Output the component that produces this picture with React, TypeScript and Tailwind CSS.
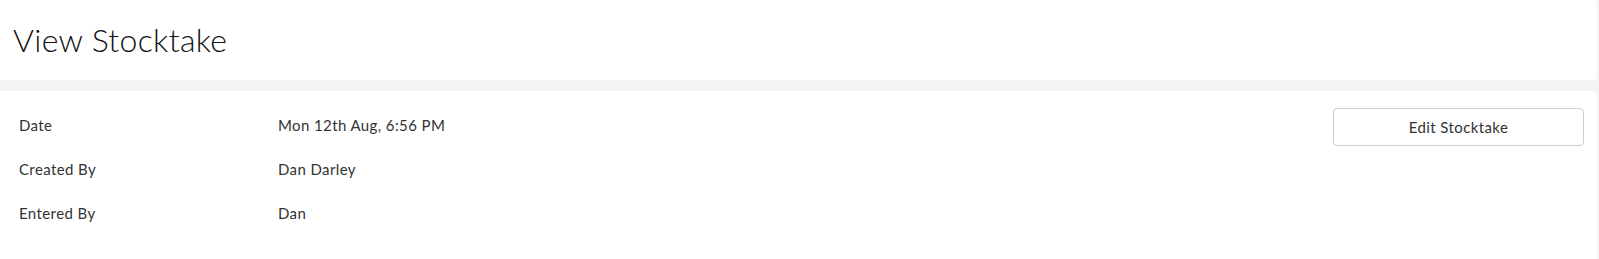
export default function App() {
  const rows = [
    { label: "Date", value: "Mon 12th Aug, 6:56 PM" },
    { label: "Created By", value: "Dan Darley" },
    { label: "Entered By", value: "Dan" },
  ];

  return (
    <div className="h-[259px] w-full bg-[#f3f3f3] font-['Lato',sans-serif] text-[#333]">
      <div className="mr-[2px] flex h-[80px] items-center rounded-r bg-white pl-[13px]">
        <h1 className="text-[32px] font-light leading-none tracking-[0.3px] text-[#111]">View Stocktake</h1>
      </div>
      <div className="mr-[2px] mt-[11px] flex h-[168px] rounded-tr bg-white">
        <div className="flex-1 pl-[19px] pt-[24px]">
          {rows.map((r) => (
            <div key={r.label} className="flex h-[44px] text-[15px] leading-[20px] tracking-[0.4px]">
              <div className="w-[259px]">{r.label}</div>
              <div>{r.value}</div>
            </div>
          ))}
        </div>
        <div className="pr-[13px] pt-[17px]">
          <button className="h-[38px] w-[251px] rounded border border-[#ccc] bg-white text-[15px] tracking-[0.4px] text-[#333]">
            Edit Stocktake
          </button>
        </div>
      </div>
    </div>
  );
}
